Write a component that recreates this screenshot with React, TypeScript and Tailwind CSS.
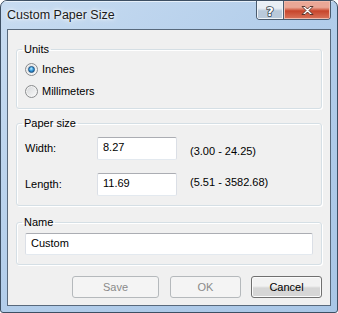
import React from 'react';

function Radio({ checked, label }: { checked?: boolean; label: string }) {
  return (
    <div className="flex items-center gap-[4px] h-[15px] pl-[8px]">
      <span className="w-[13px] h-[13px] rounded-full border border-[#8a8c8e] bg-linear-to-br from-[#d4d6d8] to-[#fbfbfb] flex items-center justify-center shadow-[inset_0_0_0_1px_#f4f4f4]">
        {checked && (
          <span className="w-[7px] h-[7px] rounded-full border border-[#1c5180] bg-[radial-gradient(circle_at_45%_35%,#b9ecff_0%,#3b9ee0_45%,#0e4f8e_100%)]" />
        )}
      </span>
      <span>{label}</span>
    </div>
  );
}

function Group({ title, className, children }: { title: string; className?: string; children: React.ReactNode }) {
  return (
    <fieldset className={`border border-[#d5dfe5] rounded-[3px] shadow-[inset_1px_1px_0_#ffffff,1px_1px_0_#ffffff] ${className ?? ''}`}>
      <legend className="ml-[5px] px-[2px] leading-[15px]">{title}</legend>
      {children}
    </fieldset>
  );
}

function TextBox({ value, className }: { value: string; className?: string }) {
  return (
    <div
      className={`bg-white border border-[#dbdfe6] border-t-[#abadb3] border-b-[#e3e9ef] rounded-[2px] pl-[5px] pt-[2px] leading-[15px] ${className ?? ''}`}
    >
      {value}
    </div>
  );
}

function Button({ label, disabled, className }: { label: string; disabled?: boolean; className?: string }) {
  return disabled ? (
    <button className={`h-[22px] rounded-[3px] border border-[#b5b9bc] bg-[#f4f4f4] text-[#8a8a8a] leading-[15px] ${className ?? ''}`}>
      {label}
    </button>
  ) : (
    <button
      className={`h-[22px] rounded-[3px] border border-[#707070] bg-linear-to-b from-[#f2f2f2] from-45% to-[#d6d6d6] to-55% shadow-[inset_0_0_0_1px_#fbfbfb] text-black leading-[15px] ${className ?? ''}`}
    >
      {label}
    </button>
  );
}

export default function App() {
  return (
    <div className="w-[338px] h-[313px] flex flex-col border border-[#3d4f63] rounded-t-[7px] rounded-b-[3px] bg-linear-to-br from-[#c8dcf1] via-[#b2cdea] to-[#a9c6e6] text-[11px] text-black font-['Liberation_Sans',Arial,sans-serif] overflow-hidden">
      <div className="h-[28px] flex items-start shrink-0 shadow-[inset_0_1px_0_#e6f0fa]">
        <div className="pl-[6px] pt-[6px] leading-[16px] text-[12.5px] text-[#1a1a1a] [text-shadow:0_0_6px_#ffffff,0_0_3px_#ffffff] flex-1">
          Custom Paper Size
        </div>
        <div className="flex mr-[6px] h-[19px] border border-t-0 border-[#4a5b6e] rounded-b-[4px] overflow-hidden">
          <div className="w-[27px] h-full border-r border-[#4a5b6e] bg-linear-to-b from-[#e8eef4] from-40% to-[#b9c9da] to-55% flex items-center justify-center shadow-[inset_0_0_0_1px_#eef3f8]">
            <svg width="12" height="15" viewBox="0 0 12 15">
              <text
                x="6"
                y="12.5"
                textAnchor="middle"
                fontFamily="DejaVu Sans, sans-serif"
                fontWeight="bold"
                fontSize="13"
                fill="#ffffff"
                stroke="#36434f"
                strokeWidth="1.6"
                paintOrder="stroke"
                strokeLinejoin="round"
              >
                ?
              </text>
            </svg>
          </div>
          <div className="w-[46px] h-full bg-linear-to-b from-[#eaa796] from-35% via-[#c7442a] via-55% to-[#d9735a] flex items-center justify-center shadow-[inset_0_0_0_1px_#f0b9aa]">
            <svg width="15" height="11" viewBox="0 0 15 11">
              <path
                d="M2 1.5 L5 1.5 L7.5 4 L10 1.5 L13 1.5 L9 5.5 L13 9.5 L10 9.5 L7.5 7 L5 9.5 L2 9.5 L6 5.5 Z"
                fill="#ffffff"
                stroke="#4a2a24"
                strokeWidth="0.9"
                strokeLinejoin="round"
              />
            </svg>
          </div>
        </div>
      </div>

      <div className="flex-1 mx-[6px] mb-[6px] border border-[#58697c] bg-[#f0f0f0] flex flex-col pt-[12px] px-[8px] pb-[7px]">
        <Group title="Units" className="pb-[9px]">
          <div className="mt-[5px]">
            <Radio checked label="Inches" />
          </div>
          <div className="mt-[7px]">
            <Radio label="Millimeters" />
          </div>
        </Group>

        <Group title="Paper size" className="mt-[7px] pb-[9px]">
          <div className="flex items-start mt-[6px] pl-[8px]">
            <span className="w-[72px] mt-[4px] leading-[15px]">Width:</span>
            <TextBox value="8.27" className="w-[80px] h-[23px]" />
            <span className="ml-[13px] mt-[7px] leading-[15px]">(3.00 - 24.25)</span>
          </div>
          <div className="flex items-start mt-[13px] pl-[8px]">
            <span className="w-[72px] mt-[4px] leading-[15px]">Length:</span>
            <TextBox value="11.69" className="w-[80px] h-[23px]" />
            <span className="ml-[13px] mt-[2px] leading-[15px]">(5.51 - 3582.68)</span>
          </div>
        </Group>

        <Group title="Name" className="mt-[9px] pb-[9px]">
          <div className="px-[8px] mt-[3px]">
            <TextBox value="Custom" className="h-[22px]" />
          </div>
        </Group>

        <div className="flex justify-end mt-[11px]">
          <Button label="Save" disabled className="w-[87px] mr-[11px]" />
          <Button label="OK" disabled className="w-[71px] mr-[10px]" />
          <Button label="Cancel" className="w-[71px]" />
        </div>
      </div>
    </div>
  );
}
